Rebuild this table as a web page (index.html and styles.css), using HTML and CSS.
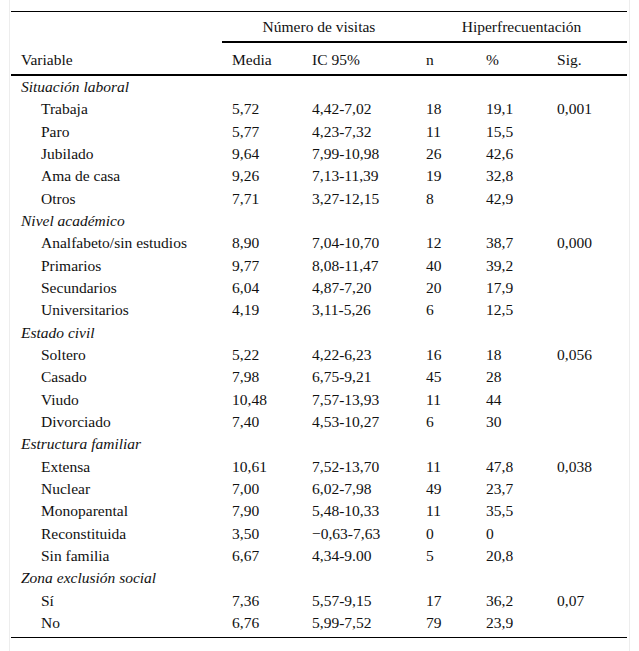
FILE: index.html
```html
<!DOCTYPE html>
<html lang="es">
<head>
<meta charset="utf-8">
<link rel="stylesheet" href="styles.css">
</head>
<body>
<div class="frame">
<table class="data">
<colgroup>
<col class="c-var"><col class="c-media"><col class="c-ic"><col class="c-n"><col class="c-pct"><col class="c-sig">
</colgroup>
<thead>
<tr class="h1">
<th></th>
<th colspan="2" class="span">Número de visitas</th>
<th colspan="3" class="span">Hiperfrecuentación</th>
</tr>
<tr class="h2">
<th>Variable</th><th>Media</th><th>IC 95%</th><th>n</th><th>%</th><th>Sig.</th>
</tr>
</thead>
<tbody>
<tr class="grp"><td colspan="6">Situación laboral</td></tr>
<tr><td class="ind">Trabaja</td><td>5,72</td><td>4,42-7,02</td><td>18</td><td>19,1</td><td>0,001</td></tr>
<tr><td class="ind">Paro</td><td>5,77</td><td>4,23-7,32</td><td>11</td><td>15,5</td><td></td></tr>
<tr><td class="ind">Jubilado</td><td>9,64</td><td>7,99-10,98</td><td>26</td><td>42,6</td><td></td></tr>
<tr><td class="ind">Ama de casa</td><td>9,26</td><td>7,13-11,39</td><td>19</td><td>32,8</td><td></td></tr>
<tr><td class="ind">Otros</td><td>7,71</td><td>3,27-12,15</td><td>8</td><td>42,9</td><td></td></tr>
<tr class="grp"><td colspan="6">Nivel académico</td></tr>
<tr><td class="ind">Analfabeto/sin estudios</td><td>8,90</td><td>7,04-10,70</td><td>12</td><td>38,7</td><td>0,000</td></tr>
<tr><td class="ind">Primarios</td><td>9,77</td><td>8,08-11,47</td><td>40</td><td>39,2</td><td></td></tr>
<tr><td class="ind">Secundarios</td><td>6,04</td><td>4,87-7,20</td><td>20</td><td>17,9</td><td></td></tr>
<tr><td class="ind">Universitarios</td><td>4,19</td><td>3,11-5,26</td><td>6</td><td>12,5</td><td></td></tr>
<tr class="grp"><td colspan="6">Estado civil</td></tr>
<tr><td class="ind">Soltero</td><td>5,22</td><td>4,22-6,23</td><td>16</td><td>18</td><td>0,056</td></tr>
<tr><td class="ind">Casado</td><td>7,98</td><td>6,75-9,21</td><td>45</td><td>28</td><td></td></tr>
<tr><td class="ind">Viudo</td><td>10,48</td><td>7,57-13,93</td><td>11</td><td>44</td><td></td></tr>
<tr><td class="ind">Divorciado</td><td>7,40</td><td>4,53-10,27</td><td>6</td><td>30</td><td></td></tr>
<tr class="grp"><td colspan="6">Estructura familiar</td></tr>
<tr><td class="ind">Extensa</td><td>10,61</td><td>7,52-13,70</td><td>11</td><td>47,8</td><td>0,038</td></tr>
<tr><td class="ind">Nuclear</td><td>7,00</td><td>6,02-7,98</td><td>49</td><td>23,7</td><td></td></tr>
<tr><td class="ind">Monoparental</td><td>7,90</td><td>5,48-10,33</td><td>11</td><td>35,5</td><td></td></tr>
<tr><td class="ind">Reconstituida</td><td>3,50</td><td>&minus;0,63-7,63</td><td>0</td><td>0</td><td></td></tr>
<tr><td class="ind">Sin familia</td><td>6,67</td><td>4,34-9.00</td><td>5</td><td>20,8</td><td></td></tr>
<tr class="grp"><td colspan="6">Zona exclusión social</td></tr>
<tr><td class="ind">Sí</td><td>7,36</td><td>5,57-9,15</td><td>17</td><td>36,2</td><td>0,07</td></tr>
<tr class="last"><td class="ind">No</td><td>6,76</td><td>5,99-7,52</td><td>79</td><td>23,9</td><td></td></tr>
</tbody>
</table>
</div>
</body>
</html>
```

FILE: styles.css
```css
html, body {
  margin: 0;
  padding: 0;
  background: #fff;
}
body, table, th, td {
  font-family: "Liberation Serif", "Times New Roman", serif;
  font-size: 15.5px;
  color: #111;
}
.frame {
  margin-left: 9px;
  width: 618px;
  padding: 11px 0 13px 1px;
  border-left: 1px solid #ededed;
  border-right: 1px solid #ededed;
}
.data {
  border-collapse: collapse;
  width: 616px;
  table-layout: fixed;
  border-top: 1px solid #000;
  border-bottom: 1px solid #000;
}
.c-var { width: 211px; }
.c-media { width: 80px; }
.c-ic { width: 114px; }
.c-n { width: 60px; }
.c-pct { width: 71px; }
.c-sig { width: 80px; }
th, td {
  padding: 0 0 0 10px;
  text-align: left;
  font-weight: normal;
  white-space: nowrap;
  vertical-align: middle;
  line-height: 16px;
}
.h1 th {
  height: 29px;
}
.h1 th.span {
  text-align: center;
  padding-left: 0;
  border-bottom: 2px solid #000;
}
.h2 th {
  height: 28px;
  padding-top: 3px;
  border-bottom: 2px solid #000;
}
tbody td {
  height: 22.33px;
}
.grp td {
  font-style: italic;
}
td.ind {
  padding-left: 30px;
}
.last td {
  height: 25px;
  vertical-align: top;
  line-height: 22px;
}
```
